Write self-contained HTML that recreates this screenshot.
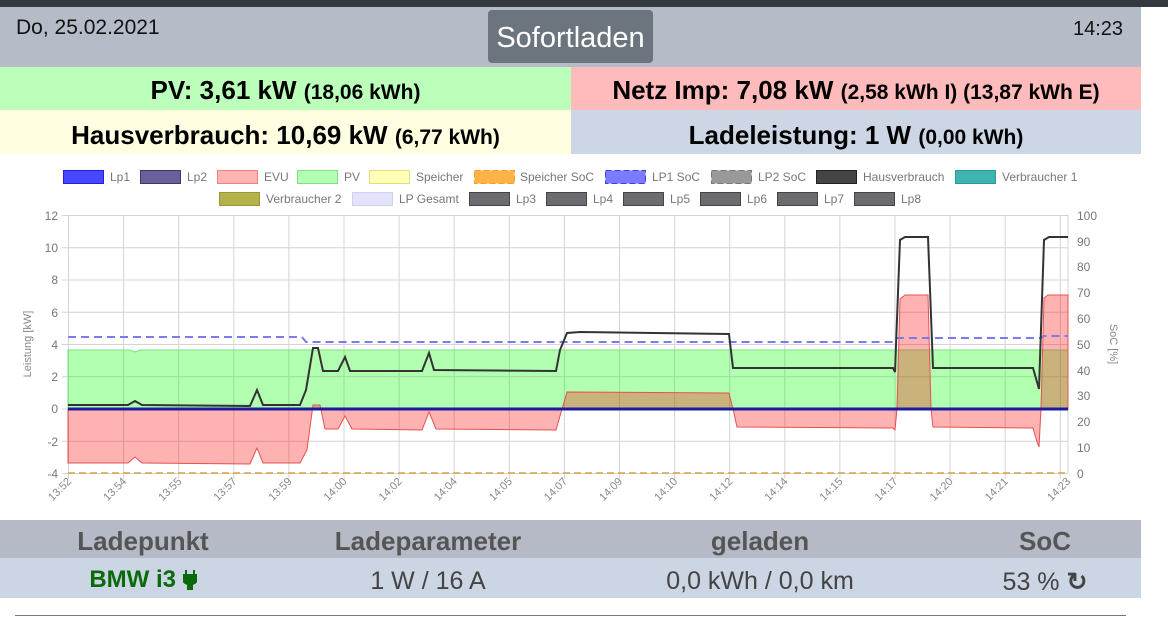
<!DOCTYPE html>
<html><head><meta charset="utf-8"><style>
*{margin:0;padding:0;box-sizing:border-box}
body{width:1168px;height:620px;background:#fff;font-family:"Liberation Sans",sans-serif;position:relative;overflow:hidden}
.a{position:absolute}
.c{text-align:center;white-space:nowrap}
.big{font-weight:bold;font-size:26px;color:#000}
.big small{font-size:21px}
</style></head><body>
<div class="a" style="left:0;top:0;width:1168px;height:7px;background:#343a40"></div>
<div class="a" style="left:0;top:7px;width:1141px;height:60px;background:#b6bbc8"></div>
<div class="a" style="left:16px;top:16px;font-size:21px;color:#111">Do, 25.02.2021</div>
<div class="a" style="left:1073px;top:18px;font-size:20px;color:#111">14:23</div>
<div class="a c" style="left:488px;top:10px;width:165px;height:53px;background:#6c757d;border-radius:4px;color:#fff;font-size:29px;line-height:56px">Sofortladen</div>
<div class="a c big" style="left:0;top:67px;width:571px;height:43px;background:#bbffbb;line-height:47px">PV: 3,61 kW <small>(18,06 kWh)</small></div>
<div class="a c big" style="left:571px;top:67px;width:570px;height:43px;background:#ffbbbb;line-height:47px">Netz Imp: 7,08 kW <small>(2,58 kWh I) (13,87 kWh E)</small></div>
<div class="a c big" style="left:0;top:110px;width:571px;height:44px;background:#fffee0;line-height:51px">Hausverbrauch: 10,69 kW <small>(6,77 kWh)</small></div>
<div class="a c big" style="left:571px;top:110px;width:570px;height:44px;background:#ccd6e4;line-height:51px">Ladeleistung: 1 W <small>(0,00 kWh)</small></div>

<svg class="a" style="left:0;top:0" width="1168" height="620" font-family="Liberation Sans, sans-serif">
<g font-size="12" fill="#777">
<rect x="63.5" y="170.5" width="40" height="13" fill="#4747ff" stroke="#2020e0"/><text x="110" y="181">Lp1</text>
<rect x="140.5" y="170.5" width="40" height="13" fill="#6a5f9a" stroke="#3e3470"/><text x="187" y="181">Lp2</text>
<rect x="217.5" y="170.5" width="40" height="13" fill="#ffb3b3" stroke="#f08080"/><text x="264" y="181">EVU</text>
<rect x="297.5" y="170.5" width="40" height="13" fill="#b3ffb3" stroke="#80e080"/><text x="344" y="181">PV</text>
<rect x="369.5" y="170.5" width="40" height="13" fill="#ffffb8" stroke="#e0e080"/><text x="416" y="181">Speicher</text>
<rect x="474.5" y="170.5" width="40" height="13" fill="#ffb347" stroke="#f0a030" stroke-dasharray="6 3"/><text x="520" y="181">Speicher SoC</text>
<rect x="605.5" y="170.5" width="40" height="13" fill="#7b7bff" stroke="#4040e0" stroke-dasharray="6 3"/><text x="652" y="181">LP1 SoC</text>
<rect x="711.5" y="170.5" width="40" height="13" fill="#999" stroke="#777" stroke-dasharray="6 3"/><text x="758" y="181">LP2 SoC</text>
<rect x="816.5" y="170.5" width="40" height="13" fill="#444" stroke="#222"/><text x="863" y="181">Hausverbrauch</text>
<rect x="955.5" y="170.5" width="40" height="13" fill="#3fb3b0" stroke="#2a9a97"/><text x="1002" y="181">Verbraucher 1</text>
<rect x="219.5" y="192.5" width="40" height="13" fill="#b4b24a" stroke="#999530"/><text x="266" y="203">Verbraucher 2</text>
<rect x="352.5" y="192.5" width="40" height="13" fill="#e3e3fa" stroke="#cfcff0"/><text x="399" y="203">LP Gesamt</text>
<rect x="469.5" y="192.5" width="40" height="13" fill="#6b6b70" stroke="#444"/><text x="516" y="203">Lp3</text>
<rect x="546.5" y="192.5" width="40" height="13" fill="#6b6b70" stroke="#444"/><text x="593" y="203">Lp4</text>
<rect x="623.5" y="192.5" width="40" height="13" fill="#6b6b70" stroke="#444"/><text x="670" y="203">Lp5</text>
<rect x="700.5" y="192.5" width="40" height="13" fill="#6b6b70" stroke="#444"/><text x="747" y="203">Lp6</text>
<rect x="777.5" y="192.5" width="40" height="13" fill="#6b6b70" stroke="#444"/><text x="824" y="203">Lp7</text>
<rect x="854.5" y="192.5" width="40" height="13" fill="#6b6b70" stroke="#444"/><text x="901" y="203">Lp8</text>
</g>
<g stroke="#d4d4d4" stroke-width="1">
<path d="M62,215.5H1068M62,247.75H1068M62,280H1068M62,312.25H1068M62,344.5H1068M62,376.75H1068M62,409H1068M62,441.25H1068M62,473.5H1068"/>
<path d="M68.5,215V479M123.6,215V479M178.7,215V479M233.8,215V479M288.9,215V479M344,215V479M399.1,215V479M454.2,215V479M509.3,215V479M564.4,215V479M619.5,215V479M674.6,215V479M729.7,215V479M784.8,215V479M839.9,215V479M895,215V479M950.1,215V479M1005.2,215V479M1060.3,215V479M1068,215V473"/>
</g>
<g font-size="12" fill="#777" text-anchor="end">
<text x="58" y="220">12</text><text x="58" y="252">10</text><text x="58" y="284">8</text><text x="58" y="317">6</text><text x="58" y="349">4</text><text x="58" y="381">2</text><text x="58" y="413">0</text><text x="58" y="446">-2</text><text x="58" y="478">-4</text>
</g>
<g font-size="12" fill="#777">
<text x="1077" y="220">100</text><text x="1077" y="246">90</text><text x="1077" y="271">80</text><text x="1077" y="297">70</text><text x="1077" y="323">60</text><text x="1077" y="349">50</text><text x="1077" y="375">40</text><text x="1077" y="400">30</text><text x="1077" y="426">20</text><text x="1077" y="452">10</text><text x="1077" y="478">0</text>
</g>
<text transform="translate(31,344) rotate(-90)" font-size="11" fill="#888" text-anchor="middle">Leistung [kW]</text>
<text transform="translate(1110,344) rotate(90)" font-size="11" fill="#888" text-anchor="middle">SoC [%]</text>
<path d="M68,409L68,350L130,350L135,352L140,350L1068,350L1068,409Z" fill="rgba(0,255,0,0.3)" stroke="#7de07d" stroke-width="1"/>
<path d="M68,409L68,463L128,463L135,457L142,463L250,464L257,448L263,463L300,463L307,450L313,405L320,405L325,429L338,429L345,416L352,429L422,430L429,412L436,429L556,430L562,409L567,392L729,393L733,409L737,427L893,428L895,430L897,409L900,299L905,295L928,295L931,409L933,427L1033,428L1037,442L1039,447L1041,409L1044,298L1048,295L1068,295L1068,409Z" fill="rgba(255,0,0,0.3)" stroke="#e85050" stroke-width="1"/>
<path d="M68,473H1068" stroke="#e0a040" stroke-width="1.5" stroke-dasharray="7 4"/>
<path d="M68,337H302L306,342H893L897,338H1040L1044,336H1068" fill="none" stroke="#7b7bef" stroke-width="2" stroke-dasharray="8 5"/>
<path d="M68,409H1068" stroke="#1c1ca0" stroke-width="3"/>
<path d="M68,405L128,405L135,401L142,405L250,406L257,390L263,405L300,405L306,390L313,348L318,348L323,371L338,371L345,357L350,371L422,371L429,353L434,370L556,371L560,350L567,333L580,332L729,334L733,368L893,368L895,372L900,240L905,237L928,237L933,368L1033,368L1039,389L1044,240L1049,237L1068,237" fill="none" stroke="#333" stroke-width="2"/>
<g font-size="11" fill="#888" text-anchor="end">
<text transform="translate(72,482) rotate(-45)">13:52</text>
<text transform="translate(127.1,482) rotate(-45)">13:54</text>
<text transform="translate(182.2,482) rotate(-45)">13:55</text>
<text transform="translate(237.3,482) rotate(-45)">13:57</text>
<text transform="translate(292.4,482) rotate(-45)">13:59</text>
<text transform="translate(347.5,482) rotate(-45)">14:00</text>
<text transform="translate(402.6,482) rotate(-45)">14:02</text>
<text transform="translate(457.7,482) rotate(-45)">14:04</text>
<text transform="translate(512.8,482) rotate(-45)">14:05</text>
<text transform="translate(567.9,482) rotate(-45)">14:07</text>
<text transform="translate(623,482) rotate(-45)">14:09</text>
<text transform="translate(678.1,482) rotate(-45)">14:10</text>
<text transform="translate(733.2,482) rotate(-45)">14:12</text>
<text transform="translate(788.3,482) rotate(-45)">14:14</text>
<text transform="translate(843.4,482) rotate(-45)">14:15</text>
<text transform="translate(898.5,482) rotate(-45)">14:17</text>
<text transform="translate(953.6,482) rotate(-45)">14:20</text>
<text transform="translate(1008.7,482) rotate(-45)">14:21</text>
<text transform="translate(1071,482) rotate(-45)">14:23</text>
</g>
<path d="M15,615.5H1126" stroke="#777" stroke-width="1"/>
</svg>

<div class="a" style="left:0;top:520px;width:1141px;height:38px;background:#b5bac6"></div>
<div class="a" style="left:0;top:558px;width:1141px;height:40px;background:#ccd5e3"></div>
<div class="a c" style="left:43px;top:526px;width:200px;font-size:26px;font-weight:bold;color:#555">Ladepunkt</div>
<div class="a c" style="left:328px;top:526px;width:200px;font-size:26px;font-weight:bold;color:#555">Ladeparameter</div>
<div class="a c" style="left:660px;top:526px;width:200px;font-size:26px;font-weight:bold;color:#555">geladen</div>
<div class="a c" style="left:945px;top:526px;width:200px;font-size:26px;font-weight:bold;color:#555">SoC</div>
<div class="a c" style="left:43px;top:566px;width:200px;font-size:24px;font-weight:bold;color:#0a6a0a">BMW i3 <svg width="14" height="20" viewBox="0 0 14 20" style="vertical-align:-3px"><path d="M3,0v5M11,0v5M0,5h14v4c0,3-3,5-5,5v6h-4v-6c-2,0-5-2-5-5z" fill="#0a6a0a" stroke="#0a6a0a" stroke-width="2"/></svg></div>
<div class="a c" style="left:328px;top:567px;width:200px;font-size:25px;color:#444">1 W / 16 A</div>
<div class="a c" style="left:660px;top:567px;width:200px;font-size:25px;color:#444">0,0 kWh / 0,0 km</div>
<div class="a c" style="left:945px;top:567px;width:200px;font-size:25px;color:#444">53 % <span style="font-weight:bold;font-size:25px">&#x21BB;</span></div>
</body></html>
